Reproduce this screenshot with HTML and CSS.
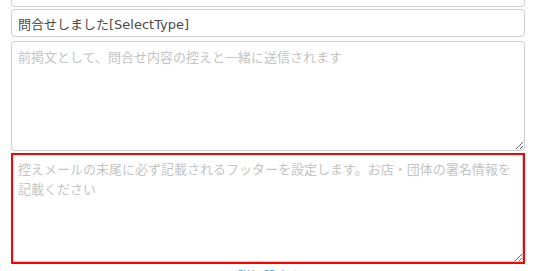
FILE: index.html
```html
<!DOCTYPE html>
<html lang="ja">
<head>
<meta charset="utf-8">
<link rel="stylesheet" href="styles.css">
</head>
<body>
<div class="form">
  <input class="field field-top" type="text" value="">
  <input class="field field-subject" type="text" value="問合せしました[SelectType]">
  <textarea class="area area-header" placeholder="前掲文として、問合せ内容の控えと一緒に送信されます"></textarea>
  <textarea class="area area-footer" placeholder="控えメールの末尾に必ず記載されるフッターを設定します。お店・団体の署名情報を記載ください"></textarea>
  <div class="more"><a class="more-link" href="#">詳細設定を開く</a></div>
</div>
</body>
</html>
```
FILE: styles.css
```css
html, body {
  margin: 0;
  padding: 0;
  background: #fff;
  overflow: hidden;
}
.form {
  display: flex;
  flex-direction: column;
  width: 514px;
  margin: -23px 0 0 11px;
  font-family: "DejaVu Sans", "Noto Sans CJK JP", sans-serif;
  font-size: 13px;
}
.field, .area {
  box-sizing: border-box;
  width: 100%;
  border: 1px solid #cccccc;
  border-radius: 4px;
  font-family: inherit;
  font-size: 13px;
  color: #4a4a4a;
  background: #fff;
  padding: 0 6px;
  margin: 0;
  outline: none;
}
.field-top {
  height: 30px;
}
.field-subject {
  height: 28px;
  margin-top: 2px;
  line-height: 26px;
}
.area {
  resize: vertical;
  padding: 6px 6px;
  line-height: 20px;
}
.area::placeholder {
  color: #c4c4c4;
}
.area-header {
  height: 110px;
  margin-top: 4px;
}
.area-footer {
  height: 111px;
  margin-top: 2px;
  border: 2px solid #ff0000;
  border-radius: 0;
  padding: 5px 5px;
  box-shadow: inset -1px -1px 0 #cfcfcf;
}
.more {
  margin-top: 2px;
  text-align: center;
  padding-left: 30px;
}
.more-link {
  color: #3399ee;
  text-decoration: none;
  font-size: 13px;
  line-height: 22px;
}
```
